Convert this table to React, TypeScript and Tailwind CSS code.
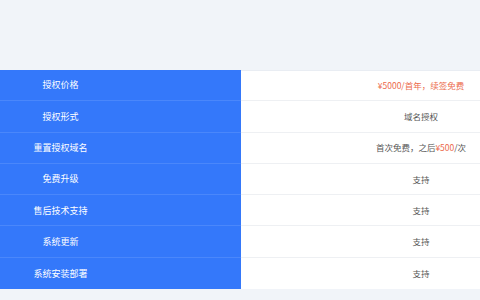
import React from "react";

type Row = { label: string; value: React.ReactNode };

const accent = "text-[#ec6a4c]";

const rows: Row[] = [
  { label: "授权价格", value: <span className={accent}>¥5000/首年，续签免费</span> },
  { label: "授权形式", value: "域名授权" },
  {
    label: "重置授权域名",
    value: (
      <span>
        首次免费，之后<span className={accent}>¥500</span>/次
      </span>
    ),
  },
  { label: "免费升级", value: "支持" },
  { label: "售后技术支持", value: "支持" },
  { label: "系统更新", value: "支持" },
  { label: "系统安装部署", value: "支持" },
];

export default function App() {
  return (
    <div
      className="w-[480px] h-[300px] bg-[#f1f4f9] flex flex-col overflow-hidden"
      style={{ fontFamily: '"Noto Sans CJK SC", "Noto Sans", sans-serif' }}
    >
      <div className="h-[70px] shrink-0" />
      <div className="flex flex-col">
        {rows.map((r, i) => (
          <div key={i} className="flex h-[31.3px]">
            <div
              className={`w-[241px] flex items-center bg-[#3478fa] text-white text-[9px] ${
                i < rows.length - 1 ? "border-b border-[#4a87fb]" : ""
              }`}
            >
              <span className="w-[121px] text-center">{r.label}</span>
            </div>
            <div
              className={`flex-1 flex items-center bg-white text-[#555] text-[8.5px] ${
                i < rows.length - 1 ? "border-b border-[#eef0f3]" : ""
              } ${i === 0 ? "border-t border-t-[#e9edf3]" : ""}`}
            >
              <span className="ml-[121px] w-[118px] text-center whitespace-nowrap">{r.value}</span>
            </div>
          </div>
        ))}
      </div>
    </div>
  );
}
